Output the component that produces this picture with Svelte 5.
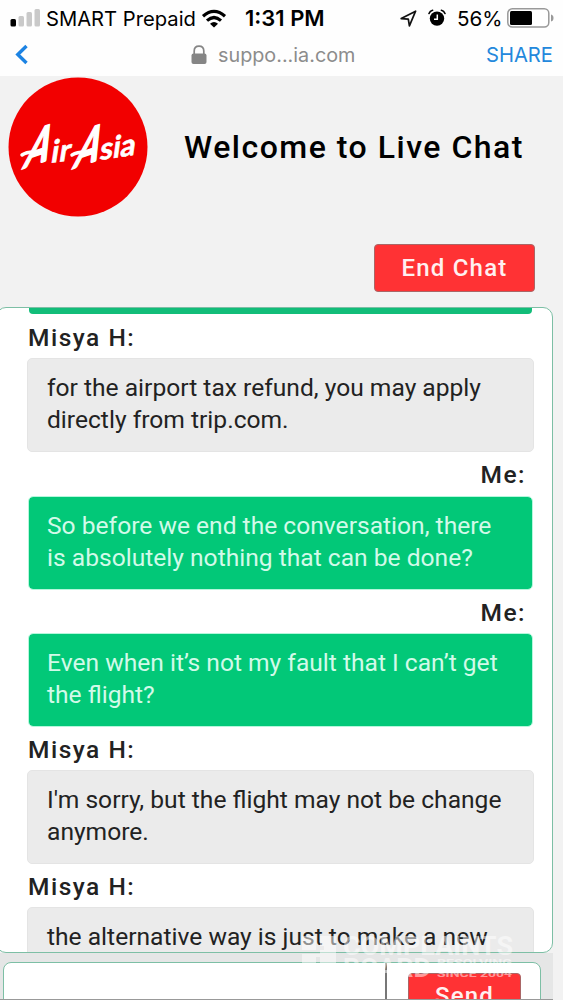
<script lang="ts">
	type Message = { from: string; lines: string[]; own: boolean };

	const messages: Message[] = [
		{ from: 'Misya H', lines: ['for the airport tax refund, you may apply', 'directly from trip.com.'], own: false },
		{ from: 'Me', lines: ['So before we end the conversation, there', 'is absolutely nothing that can be done?'], own: true },
		{ from: 'Me', lines: ['Even when it’s not my fault that I can’t get', 'the flight?'], own: true },
		{ from: 'Misya H', lines: ["I'm sorry, but the flight may not be change", 'anymore.'], own: false },
		{ from: 'Misya H', lines: ['the alternative way is just to make a new'], own: false }
	];
</script>

<div class="screen">
	<div class="status">
		<svg class="signal" width="30" height="18" viewBox="0 0 30 18">
			<rect x="0.5" y="10" width="5.5" height="7.5" rx="1.5" fill="#000" />
			<rect x="8.5" y="7" width="5.5" height="10.5" rx="1.5" fill="#c9c9c9" />
			<rect x="16.5" y="3" width="5.5" height="14.5" rx="1.5" fill="#c9c9c9" />
			<rect x="24.5" y="0" width="5.5" height="17.5" rx="1.5" fill="#c9c9c9" />
		</svg>
		<span class="carrier">SMART Prepaid</span>
		<svg class="wifi" width="26" height="19" viewBox="0 0 26 19">
			<path d="M2 7.2Q13-2.5 24 7.2M6 11.6Q13 5.4 20 11.6" fill="none" stroke="#000" stroke-width="3.2" />
			<path d="M9 14.8Q13 11.4 17 14.8L13 18.4Z" />
		</svg>
		<span class="time">1:31 PM</span>
		<svg class="arrow" width="17" height="17" viewBox="0 0 17 17">
			<path d="M1.2 8.6L15.6 1.2L9.4 15.8L8.3 9.1Z" fill="none" stroke="#111" stroke-width="1.7" stroke-linejoin="round" />
		</svg>
		<svg class="alarm" width="18" height="18" viewBox="0 0 18 18">
			<circle cx="9" cy="9.6" r="7.2" />
			<path d="M1 4.5Q2 1.8 4.6 1.2M17 4.5Q16 1.8 13.4 1.2" fill="none" stroke="#000" stroke-width="1.6" stroke-linecap="round" />
			<path d="M9.3 5.5V10.2H6" fill="none" stroke="#fff" stroke-width="1.5" />
		</svg>
		<span class="percent">56%</span>
		<svg class="battery" width="47" height="20" viewBox="0 0 47 20">
			<rect x="0.8" y="0.8" width="41" height="18.2" rx="4.5" fill="#fff" stroke="#999" stroke-width="1.5" />
			<rect x="3" y="3" width="22" height="14" rx="1.5" />
			<path d="M44 6.5Q46.5 7 46.5 10T44 13.5Z" fill="#999" />
		</svg>
	</div>

	<div class="browser">
		<svg class="back" width="14" height="21" viewBox="0 0 14 21">
			<path d="M11.5 2L2.8 10.5L11.5 19" fill="none" stroke="#1c83e3" stroke-width="3.4" />
		</svg>
		<svg class="lock" width="16" height="20" viewBox="0 0 16 20">
			<path d="M3.2 10V6Q3.2 1.2 8 1.2T12.8 6V10" fill="none" stroke="#858585" stroke-width="1.7" />
			<rect x="0.5" y="8.5" width="15" height="10.5" rx="2" fill="#858585" />
		</svg>
		<span class="address">suppo...ia.com</span>
		<span class="share">SHARE</span>
	</div>

	<header>
		<div class="brand">
			<svg class="logo" width="140" height="140" viewBox="0 0 140 140">
				<circle cx="70" cy="70" r="69.5" fill="#f20000" />
				<g class="wordmark" fill="#fff" stroke="#fff">
					<text class="initial" font-size="40" transform="matrix(0.85 -0.3 -0.46 1.36 14 92)">A</text>
					<text font-size="31" transform="translate(42 86) rotate(-7) skewX(-16)" textLength="20">ir</text>
					<text class="initial" font-size="40" transform="matrix(0.85 -0.3 -0.46 1.36 64 92)">A</text>
					<text font-size="30" transform="translate(91 83) rotate(-8) skewX(-16)" textLength="36" lengthAdjust="spacingAndGlyphs">sia</text>
					<path d="M14 78Q18 75 26 75M64 78Q69 75 77 75" fill="none" stroke-width="3.5" stroke-linecap="round" />
				</g>
			</svg>
			<h1>Welcome to Live Chat</h1>
		</div>
		<button class="end">End Chat</button>
	</header>

	<main>
		<div class="previous"></div>
		{#each messages as message}
			<div class="name" class:own={message.own}>{message.from}:</div>
			<div class="bubble" class:own={message.own}>
				{#each message.lines as line}
					<div>{line}</div>
				{/each}
			</div>
		{/each}
	</main>

	<footer>
		<div class="compose">
			<div class="input"></div>
			<button class="send">Send</button>
		</div>
	</footer>

	<svg class="watermark" width="214" height="46" viewBox="0 0 214 46" fill="#fff">
		<path d="M1 1H15V15H1ZM19 1H35V31H19V19H1V31H15V22H19V15H23V11H19Z" fill-rule="evenodd" />
		<text x="42" y="20" font-size="26" textLength="170" lengthAdjust="spacingAndGlyphs">COMPLAINTS</text>
		<text x="42" y="42" font-size="26" textLength="88" lengthAdjust="spacingAndGlyphs">BOARD</text>
		<text x="136" y="31" font-size="9.5" textLength="75" lengthAdjust="spacingAndGlyphs">RESOLVING</text>
		<text x="136" y="42" font-size="9.5" textLength="75" lengthAdjust="spacingAndGlyphs">SINCE 2004</text>
	</svg>
</div>

<style>
	:global(body) {
		margin: 0;
	}

	.screen {
		position: relative;
		box-sizing: border-box;
		width: 563px;
		height: 1000px;
		overflow: hidden;
		display: flex;
		flex-direction: column;
		background: #f2f2f2;
		font-family: Roboto, sans-serif;
		color: #222;
	}

	svg {
		display: block;
		flex: none;
	}

	.status,
	.browser {
		display: flex;
		align-items: center;
		flex: none;
		box-sizing: border-box;
		background: #fefefe;
		font-family: Inter, sans-serif;
		white-space: nowrap;
	}

	.status {
		height: 36px;
		padding-left: 10px;
		color: #000;
		font-size: 20.2px;
	}

	.carrier {
		width: 150px;
		margin-left: 6px;
	}

	.wifi {
		margin-left: 5px;
	}

	.time {
		width: 81px;
		margin-left: 18px;
		font-size: 22px;
		font-weight: 600;
	}

	.arrow {
		margin-left: 74px;
	}

	.alarm {
		margin-left: 11px;
	}

	.percent {
		width: 44px;
		margin-left: 11px;
		font-size: 20.6px;
	}

	.battery {
		margin-left: 6px;
	}

	.browser {
		height: 40px;
		padding: 0 10px 3px 15px;
		font-size: 20.2px;
	}

	.lock {
		margin-left: 162px;
	}

	.address {
		margin-left: 11px;
		color: #8c8c8c;
		font-size: 19.8px;
	}

	.share {
		margin-left: auto;
		color: #2388dc;
	}

	header {
		display: flex;
		flex-direction: column;
		flex: none;
		height: 231px;
	}

	.brand {
		display: flex;
		align-items: center;
		padding: 1px 0 0 8px;
	}

	.wordmark {
		font-family: Lato, sans-serif;
		font-weight: 700;
		stroke-width: 0.6px;
	}

	.initial {
		stroke-width: 1.5px;
		stroke-linejoin: round;
	}

	h1 {
		margin: 0 0 0 36px;
		color: #000;
		font-size: 32px;
		font-weight: 500;
		letter-spacing: 1.5px;
		line-height: 36px;
		padding-bottom: 1px;
		white-space: nowrap;
	}

	button {
		padding: 0;
		background: #ff3234;
		border: 1px solid #a66;
		border-radius: 4px;
		color: #fff0f0;
		font-family: inherit;
		font-size: 24px;
		font-weight: 500;
		letter-spacing: 1.2px;
	}

	.end {
		align-self: flex-end;
		width: 161px;
		height: 48px;
		margin: 27px 28px 0 0;
	}

	main {
		box-sizing: border-box;
		flex: none;
		width: 557px;
		height: 646px;
		margin-left: -4px;
		padding: 0 18px 0 30px;
		overflow: hidden;
		background: #fff;
		border: 1.5px solid #7dbfa5;
		border-radius: 10px;
	}

	.previous {
		height: 6px;
		margin: 0 2px 1px;
		background: #12bd79;
		border-radius: 0 0 4px 4px;
	}

	.name {
		box-sizing: border-box;
		height: 43.3px;
		padding: 0 8px 0 1px;
		font-size: 24.5px;
		font-weight: 500;
		line-height: 45px;
		letter-spacing: 1.5px;
	}

	.name.own {
		text-align: right;
	}

	.bubble {
		box-sizing: border-box;
		height: 94px;
		padding: 13px 19px;
		background: #ebebeb;
		border: 1px solid #e4e4e4;
		border-radius: 5px;
		font-size: 24.6px;
		line-height: 32px;
		white-space: nowrap;
	}

	.bubble.own {
		margin: 0 1px;
		padding: 13px 18px;
		background: #02c878;
		background-clip: padding-box;
		border-color: #b5f7dc;
		color: #d2fae9;
	}

	footer {
		flex: none;
		box-sizing: border-box;
		width: 553px;
		height: 47px;
		padding: 9px 12px 0 3px;
		background: #e5e6e6;
		border-bottom: 1px solid #999;
		overflow: hidden;
	}

	.compose {
		box-sizing: border-box;
		display: flex;
		height: 60px;
		background: #fff;
		border: 1.5px solid #7dbfa5;
		border-radius: 8px;
	}

	.input {
		width: 381px;
		border-right: 2px solid #777;
	}

	.send {
		width: 113px;
		height: 46px;
		margin: 10px 0 0 21px;
	}

	.watermark {
		position: absolute;
		left: 301px;
		top: 935px;
		opacity: 0.5;
		font-family: Roboto, sans-serif;
		font-weight: 700;
	}
</style>
